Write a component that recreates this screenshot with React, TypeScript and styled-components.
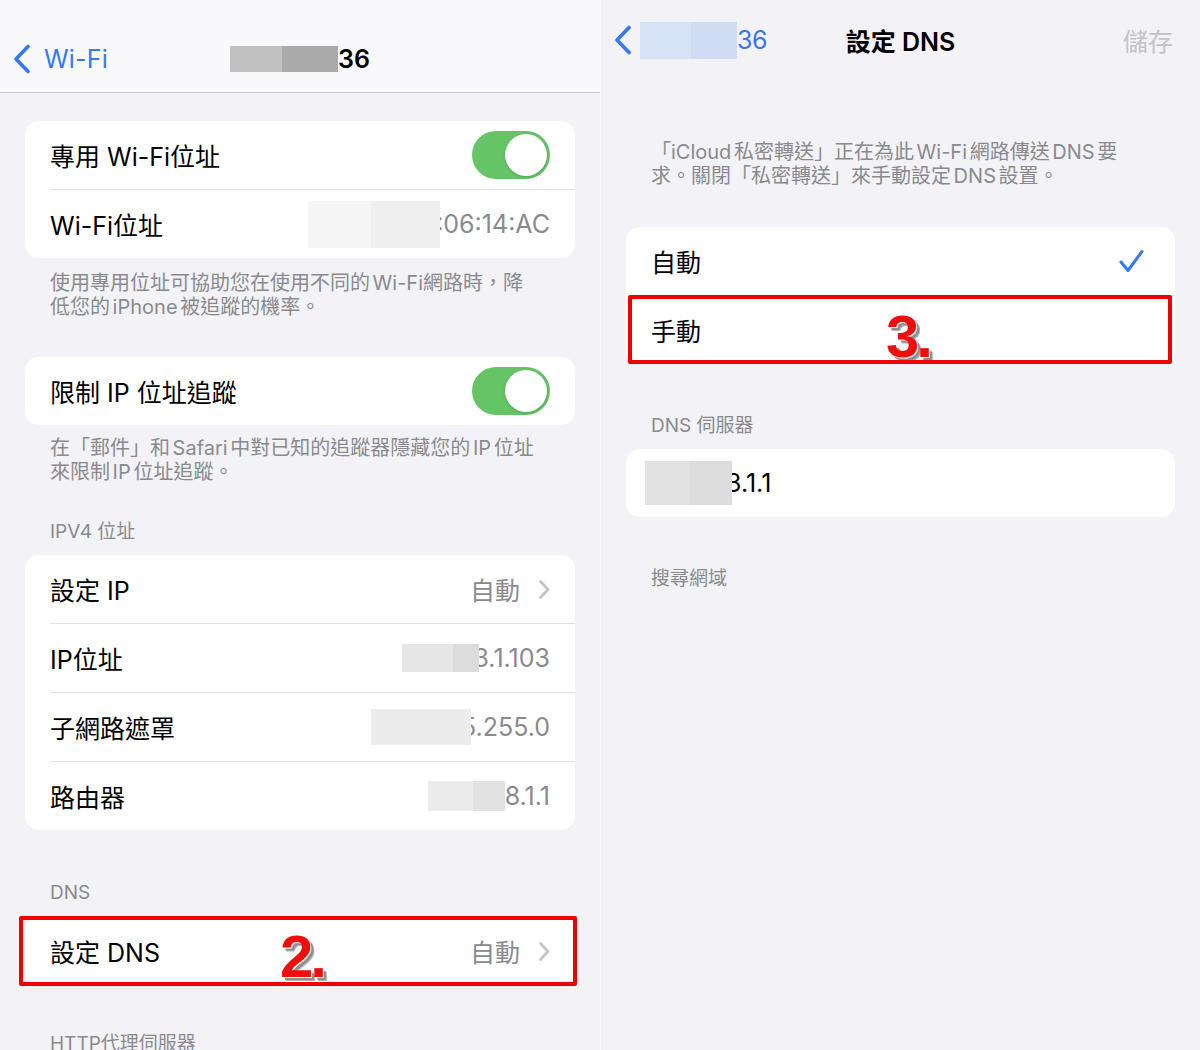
import React from "react";
import styled, { createGlobalStyle } from "styled-components";

const Global = createGlobalStyle`
  html, body { margin: 0; padding: 0; background: #f2f2f7; }
  body { font-family: "Inter", "Noto Sans CJK TC", sans-serif; -webkit-font-smoothing: antialiased; }
  * { box-sizing: border-box; }
`;

const BLUE = "#3478f6";
const GRAY = "#8a8a8e";

const Screen = styled.div`
  display: flex;
  gap: 1px;
  width: 1200px;
  height: 1050px;
  overflow: hidden;
  background: #fbfbfd;
`;

const Panel = styled.div<{ $w: number }>`
  flex: 0 0 ${(p) => p.$w}px;
  display: flex;
  flex-direction: column;
  background: #f2f2f7;
  overflow: hidden;
`;

const NavBar = styled.div<{ $h: number; $bar?: boolean; $pt: number }>`
  flex: 0 0 ${(p) => p.$h}px;
  display: grid;
  grid-template-columns: 1fr auto 1fr;
  align-items: center;
  padding-top: ${(p) => p.$pt}px;
  background: ${(p) => (p.$bar ? "#f9f9fb" : "transparent")};
  border-bottom: ${(p) => (p.$bar ? "1px solid #c9c9cd" : "none")};
`;

const Back = styled.div<{ $gap: number }>`
  display: flex;
  align-items: center;
  gap: ${(p) => p.$gap}px;
  padding-left: 13px;
  color: ${BLUE};
  font-size: 25px;
  letter-spacing: 0.2px;
`;

const NavTitle = styled.div`
  display: flex;
  align-items: center;
  font-size: 25px;
  font-weight: 600;
  color: #000;
`;

const NavAction = styled.div`
  justify-self: end;
  padding-right: 27px;
  font-size: 25px;
  color: #c3c3c7;
`;

const BackLabel = styled.span`
  display: flex;
  align-items: center;
  font-size: 25px;
  color: ${BLUE};
  letter-spacing: -0.5px;
`;

const Redact = styled.span<{ $w: number; $h: number; $c1: string; $c2: string; $split: number; $ov?: number; $ml?: number }>`
  display: inline-block;
  position: relative;
  z-index: 1;
  width: ${(p) => p.$w}px;
  height: ${(p) => p.$h}px;
  margin-right: ${(p) => -(p.$ov || 0)}px;
  margin-left: ${(p) => p.$ml || 0}px;
  background: linear-gradient(
    to right,
    ${(p) => p.$c1} 0,
    ${(p) => p.$c1} ${(p) => p.$split}%,
    ${(p) => p.$c2} ${(p) => p.$split}%,
    ${(p) => p.$c2} 100%
  );
`;

const Content = styled.div<{ $pt: number }>`
  display: flex;
  flex-direction: column;
  padding: ${(p) => p.$pt}px 25px 0;
`;

const Card = styled.div<{ $mt?: number }>`
  position: relative;
  background: #fff;
  border-radius: 14px;
  margin-top: ${(p) => p.$mt || 0}px;
`;

const Row = styled.div`
  position: relative;
  display: flex;
  padding-left: 25px;
`;

const RowInner = styled.div<{ $divider?: boolean }>`
  flex: 1;
  display: flex;
  align-items: center;
  justify-content: space-between;
  height: ${(p) => (p.$divider ? 69 : 68)}px;
  padding-right: 25px;
  border-top: ${(p) => (p.$divider ? "1px solid #e3e3e6" : "none")};
`;

const Label = styled.span`
  font-size: 25px;
  color: #000;
  white-space: nowrap;
`;

const Value = styled.span<{ $dark?: boolean }>`
  display: flex;
  align-items: center;
  font-size: 25px;
  color: ${(p) => (p.$dark ? "#000" : GRAY)};
  white-space: nowrap;
`;

const Accessory = styled.span`
  display: flex;
  align-items: center;
  gap: 19px;
`;

const Footer = styled.div<{ $pt: number }>`
  padding: ${(p) => p.$pt}px 25px 0 50px;
  font-size: 20px;
  line-height: 24px;
  word-spacing: -3px;
  color: ${GRAY};
`;

const Header = styled.div<{ $mt: number }>`
  margin-top: ${(p) => p.$mt}px;
  padding-left: 25px;
  font-size: 19px;
  line-height: 24px;
  color: ${GRAY};
`;

const Toggle = styled.span`
  display: flex;
  align-items: center;
  justify-content: flex-end;
  width: 78px;
  height: 48px;
  padding: 3px;
  border-radius: 24px;
  background: #65c466;
`;

const Knob = styled.span`
  width: 42px;
  height: 42px;
  border-radius: 50%;
  background: #fff;
  box-shadow: 0 1px 3px rgba(0, 0, 0, 0.18);
`;

const Highlight = styled.div<{ $l: number; $r: number; $t: number; $b: number }>`
  position: absolute;
  left: ${(p) => p.$l}px;
  right: ${(p) => p.$r}px;
  top: ${(p) => p.$t}px;
  bottom: ${(p) => p.$b}px;
  border: 4px solid #f00000;
  border-radius: 2px;
  pointer-events: none;
`;

const StepMark = styled.span<{ $left: number; $top: number }>`
  position: absolute;
  left: ${(p) => p.$left}px;
  top: ${(p) => p.$top}px;
  font-family: "Liberation Sans", Arial, sans-serif;
  font-weight: 700;
  font-size: 60px;
  line-height: 1;
  letter-spacing: -3px;
  color: #f20d0d;
  text-shadow: 1px 1px 0 #fff, 3px 3px 0 #8f8f8f, 4px 4px 0 #b0b0b0;
`;

const CheckWrap = styled.span`
  display: flex;
  margin-right: 6px;
`;

const Chevron = () => (
  <svg width="11" height="19" viewBox="0 0 11 19" fill="none">
    <path d="M1.5 1.5 L9 9.5 L1.5 17.5" stroke="#c4c4c7" strokeWidth="2.6" strokeLinecap="round" strokeLinejoin="round" />
  </svg>
);

const BackChevron = () => (
  <svg width="18" height="30" viewBox="0 0 18 30" fill="none">
    <path d="M15 2.5 L3 15 L15 27.5" stroke={BLUE} strokeWidth="3.6" strokeLinecap="round" strokeLinejoin="round" />
  </svg>
);

const Check = () => (
  <CheckWrap>
    <svg width="25" height="24" viewBox="0 0 25 24" fill="none">
      <path d="M2 13 L9 21.5 L23 2.5" stroke={BLUE} strokeWidth="3" strokeLinecap="round" strokeLinejoin="round" />
    </svg>
  </CheckWrap>
);

const Switch = () => (
  <Toggle>
    <Knob />
  </Toggle>
);

function LeftPanel() {
  return (
    <Panel $w={600}>
      <NavBar $h={93} $pt={26} $bar>
        <Back $gap={13}>
          <BackChevron />
          <span>Wi-Fi</span>
        </Back>
        <NavTitle>
          <Redact $w={108} $h={26} $c1="#c1c1c1" $c2="#aaaaaa" $split={48} />
          <span>36</span>
        </NavTitle>
        <span />
      </NavBar>
      <Content $pt={28}>
        <Card>
          <Row>
            <RowInner>
              <Label>專用 Wi-Fi位址</Label>
              <Switch />
            </RowInner>
          </Row>
          <Row>
            <RowInner $divider>
              <Label>Wi-Fi位址</Label>
              <Value>
                <Redact $w={132} $h={47} $c1="#f5f5f5" $c2="#efefef" $split={48} $ov={4} />
                <span>:06:14:AC</span>
              </Value>
            </RowInner>
          </Row>
        </Card>
      </Content>
      <Footer $pt={13}>
        使用專用位址可協助您在使用不同的 Wi-Fi網路時，降
        <br />
        低您的 iPhone 被追蹤的機率。
      </Footer>
      <Content $pt={38}>
        <Card>
          <Row>
            <RowInner>
              <Label>限制 IP 位址追蹤</Label>
              <Switch />
            </RowInner>
          </Row>
        </Card>
      </Content>
      <Footer $pt={11}>
        在「郵件」和 Safari 中對已知的追蹤器隱藏您的 IP 位址
        <br />
        來限制 IP 位址追蹤。
      </Footer>
      <Content $pt={0}>
        <Header $mt={36}>IPV4 位址</Header>
        <Card $mt={11}>
          <Row>
            <RowInner>
              <Label>設定 IP</Label>
              <Accessory>
                <Value>自動</Value>
                <Chevron />
              </Accessory>
            </RowInner>
          </Row>
          <Row>
            <RowInner $divider>
              <Label>IP位址</Label>
              <Value>
                <Redact $w={77} $h={28} $c1="#e6e6e6" $c2="#dcdcdc" $split={66} $ov={6} />
                <span>3.1.103</span>
              </Value>
            </RowInner>
          </Row>
          <Row>
            <RowInner $divider>
              <Label>子網路遮罩</Label>
              <Value>
                <Redact $w={100} $h={36} $c1="#ececec" $c2="#ececec" $split={50} $ov={10} />
                <span>5.255.0</span>
              </Value>
            </RowInner>
          </Row>
          <Row>
            <RowInner $divider>
              <Label>路由器</Label>
              <Value>
                <Redact $w={77} $h={30} $c1="#ececec" $c2="#e2e2e2" $split={58} />
                <span>8.1.1</span>
              </Value>
            </RowInner>
          </Row>
        </Card>
        <Header $mt={51}>DNS</Header>
        <Card $mt={12}>
          <Row>
            <RowInner>
              <Label>設定 DNS</Label>
              <Accessory>
                <Value>自動</Value>
                <Chevron />
              </Accessory>
            </RowInner>
            <StepMark $left={255} $top={10}>2.</StepMark>
          </Row>
          <Highlight $l={-6} $r={-2} $t={-1} $b={-1} />
        </Card>
        <Header $mt={47}>HTTP代理伺服器</Header>
      </Content>
    </Panel>
  );
}

function RightPanel() {
  return (
    <Panel $w={599}>
      <NavBar $h={80} $pt={0}>
        <Back $gap={8}>
          <BackChevron />
          <BackLabel>
            <Redact $w={97} $h={37} $c1="#d6e2f6" $c2="#cfdcf3" $split={53} />
            <span>36</span>
          </BackLabel>
        </Back>
        <NavTitle>設定 DNS</NavTitle>
        <NavAction>儲存</NavAction>
      </NavBar>
      <Footer $pt={60}>
        「iCloud 私密轉送」正在為此 Wi-Fi 網路傳送 DNS 要
        <br />
        求。關閉「私密轉送」來手動設定 DNS 設置。
      </Footer>
      <Content $pt={39}>
        <Card>
          <Row>
            <RowInner>
              <Label>自動</Label>
              <Check />
            </RowInner>
          </Row>
          <Row>
            <RowInner $divider>
              <Label>手動</Label>
            </RowInner>
            <StepMark $left={260} $top={12}>3.</StepMark>
            <Highlight $l={2} $r={3} $t={0} $b={0} />
          </Row>
        </Card>
        <Header $mt={50}>DNS 伺服器</Header>
        <Card $mt={11}>
          <Row>
            <RowInner>
              <Value $dark>
                <Redact $w={87} $h={44} $c1="#e2e2e2" $c2="#dcdcdc" $split={52} $ov={6} $ml={-6} />
                <span>3.1.1</span>
              </Value>
            </RowInner>
          </Row>
        </Card>
        <Header $mt={50}>搜尋網域</Header>
      </Content>
    </Panel>
  );
}

export default function App() {
  return (
    <>
      <Global />
      <Screen>
        <LeftPanel />
        <RightPanel />
      </Screen>
    </>
  );
}
